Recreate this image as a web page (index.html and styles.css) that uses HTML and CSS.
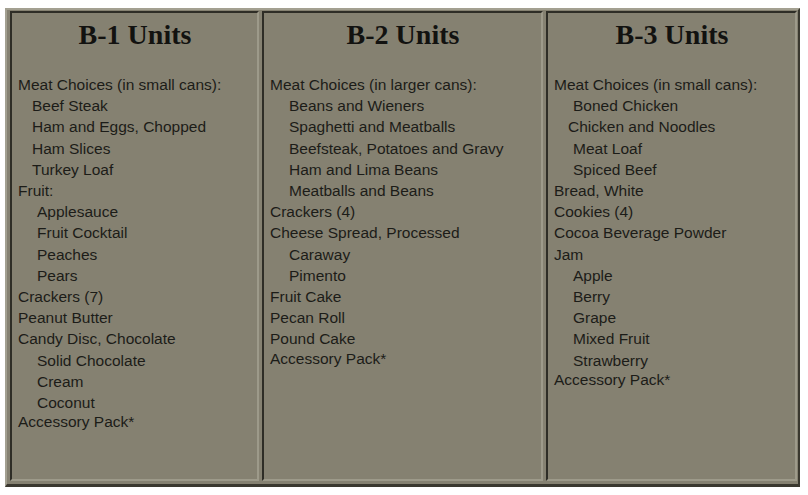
FILE: index.html
```html
<!DOCTYPE html>
<html>
<head>
<meta charset="utf-8">
<link rel="stylesheet" href="styles.css">
</head>
<body>
<div class="units">
  <div class="cell c1">
    <h2 class="title">B-1 Units</h2>
    <div class="list">
      <div>Meat Choices (in small cans):</div>
      <div class="in1">Beef Steak</div>
      <div class="in1">Ham and Eggs, Chopped</div>
      <div class="in1">Ham Slices</div>
      <div class="in1">Turkey Loaf</div>
      <div>Fruit:</div>
      <div class="in2">Applesauce</div>
      <div class="in2">Fruit Cocktail</div>
      <div class="in2">Peaches</div>
      <div class="in2">Pears</div>
      <div>Crackers (7)</div>
      <div>Peanut Butter</div>
      <div>Candy Disc, Chocolate</div>
      <div class="in2">Solid Chocolate</div>
      <div class="in2">Cream</div>
      <div class="in2">Coconut</div>
    </div>
    <div class="note">Accessory Pack*</div>
  </div>
  <div class="cell c2">
    <h2 class="title">B-2 Units</h2>
    <div class="list">
      <div>Meat Choices (in larger cans):</div>
      <div class="in2">Beans and Wieners</div>
      <div class="in2">Spaghetti and Meatballs</div>
      <div class="in2">Beefsteak, Potatoes and Gravy</div>
      <div class="in2">Ham and Lima Beans</div>
      <div class="in2">Meatballs and Beans</div>
      <div>Crackers (4)</div>
      <div>Cheese Spread, Processed</div>
      <div class="in2">Caraway</div>
      <div class="in2">Pimento</div>
      <div>Fruit Cake</div>
      <div>Pecan Roll</div>
      <div>Pound Cake</div>
    </div>
    <div class="note">Accessory Pack*</div>
  </div>
  <div class="cell c3">
    <h2 class="title">B-3 Units</h2>
    <div class="list">
      <div>Meat Choices (in small cans):</div>
      <div class="in2">Boned Chicken</div>
      <div class="in1">Chicken and Noodles</div>
      <div class="in2">Meat Loaf</div>
      <div class="in2">Spiced Beef</div>
      <div>Bread, White</div>
      <div>Cookies (4)</div>
      <div>Cocoa Beverage Powder</div>
      <div>Jam</div>
      <div class="in2">Apple</div>
      <div class="in2">Berry</div>
      <div class="in2">Grape</div>
      <div class="in2">Mixed Fruit</div>
      <div class="in2">Strawberry</div>
    </div>
    <div class="note">Accessory Pack*</div>
  </div>
</div>
</body>
</html>
```

FILE: styles.css
```css
html, body {
  margin: 0;
  padding: 0;
  background: #ffffff;
}

.units {
  box-sizing: border-box;
  display: flex;
  gap: 3px;
  margin: 8px 0 0 5px;
  width: 795px;
  height: 479px;
  padding: 1px 1px 3px 3px;
  background: #858171;
  border-style: solid;
  border-width: 2px 2px 3px 2px;
  border-color: #a3a091 #3a382f #3a382f #a3a091;
}

.cell {
  box-sizing: border-box;
  padding: 6px 5px 6px 6px;
  border-style: solid;
  border-width: 2px;
  border-color: #2e2d26 #9d9a8a #9d9a8a #2e2d26;
  background: #858171;
  color: #1c1c18;
  font-family: "Liberation Sans", Arial, sans-serif;
  font-size: 15.5px;
  line-height: 21.2px;
}

.c1 { width: 249px; }
.c2 { width: 281px; }
.c3 { width: 251px; }

.title {
  margin: 0 0 23px 0;
  font-family: "Liberation Serif", "Times New Roman", serif;
  font-weight: bold;
  font-size: 28px;
  line-height: 32px;
  text-align: center;
  color: #121210;
}

.in1 { padding-left: 14px; }
.in2 { padding-left: 19px; }

.note {
  margin-top: -2px;
}
```
